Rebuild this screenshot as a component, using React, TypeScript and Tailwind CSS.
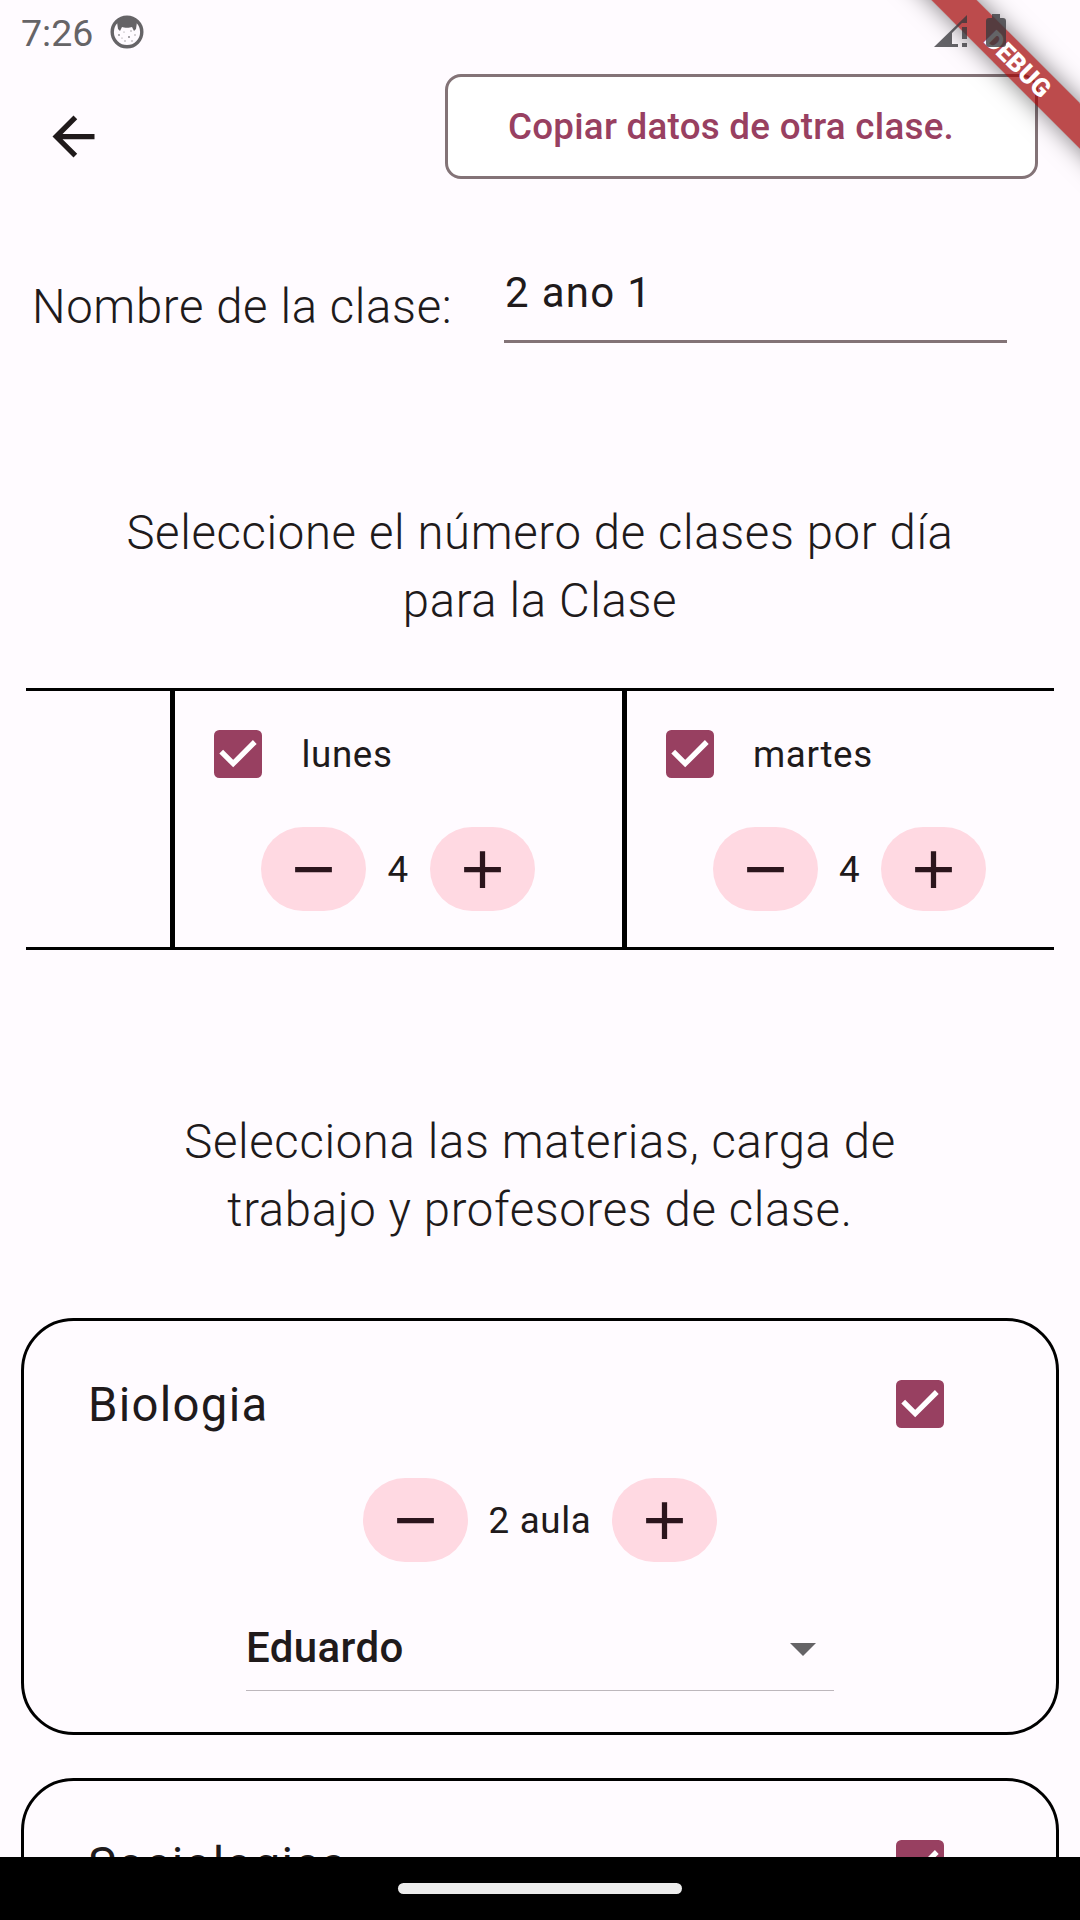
import React from "react";

function Check() {
  return (
    <svg className="h-[48px] w-[48px] shrink-0" viewBox="0 0 18 18">
      <rect width="18" height="18" rx="2" fill="#984061" />
      <path d="M2.7 8.1 7.2 12.6 15.3 4.5" fill="none" stroke="#fff" strokeWidth="2" />
    </svg>
  );
}

function RoundButton({ plus = false }: { plus?: boolean }) {
  return (
    <button className="flex h-[84px] w-[105px] shrink-0 items-center justify-center rounded-full bg-[#ffd9e2]">
      <svg className="h-[63px] w-[63px]" viewBox="0 0 24 24" fill="#2b151c">
        {plus ? <path d="M19 13h-6v6h-2v-6H5v-2h6V5h2v6h6v2z" /> : <path d="M19 13H5v-2h14v2z" />}
      </svg>
    </button>
  );
}

function Day({ name }: { name: string }) {
  return (
    <div className="flex w-[451.5px] shrink-0 flex-col border-l-[3px] border-r-[2px] border-black">
      <div className="mt-[39px] flex h-[48px] items-center pl-[39px]">
        <Check />
        <span className="pl-[39px] pt-[2px] text-[36.75px] leading-[48px] tracking-[0.66px]">{name}</span>
      </div>
      <div className="mt-[49px] flex items-center pl-[86px]">
        <RoundButton />
        <span className="w-[63.5px] pt-[2px] text-center text-[36.75px] tracking-[0.66px]">4</span>
        <RoundButton plus />
      </div>
    </div>
  );
}

type SubjectProps = { name: string; amount?: string; teacher?: string };

function Subject({ name, amount, teacher }: SubjectProps) {
  return (
    <section className="h-[417px] shrink-0 rounded-[52.5px] border-[3px] border-black">
      <div className="mt-[59px] flex h-[48px] items-center justify-between pl-[64px] pr-[112px]">
        <h3 className="pt-[2px] text-[47.25px] leading-[48px] tracking-[1.31px]">{name}</h3>
        <Check />
      </div>
      {amount && (
        <div className="mt-[50px] flex items-center justify-center">
          <RoundButton />
          <span className="w-[144px] pt-[2px] text-center text-[36.75px] tracking-[0.66px]">{amount}</span>
          <RoundButton plus />
        </div>
      )}
      {teacher && (
        <div className="mx-auto mt-[42px] flex h-[87px] w-[588px] items-center justify-between border-b border-[#bdb7bc] pr-[18px]">
          <span className="text-[42px] font-medium tracking-[0.39px]">{teacher}</span>
          <svg className="mt-[5px] h-[13px] w-[26px]" viewBox="0 0 26 13"><path d="M0 0h26L13 13z" fill="#656366" /></svg>
        </div>
      )}
    </section>
  );
}

function DebugBanner() {
  return (
    <div className="pointer-events-none absolute right-0 top-0 h-[220px] w-[220px] overflow-hidden">
      <div className="absolute left-[-2px] top-[48px] flex h-[32px] w-[320px] rotate-45 items-center justify-center bg-[#a00000]/70 text-[25.5px] font-black text-white shadow-[0_0_24px_rgba(0,0,0,0.5)]">
        <span>DEBUG</span>
      </div>
    </div>
  );
}

export default function App() {
  return (
    <div className="relative flex h-[1920px] w-[1080px] flex-col overflow-hidden bg-[#fffbff] font-['Roboto',sans-serif] text-[#201a1b]">
      <div className="flex h-[63px] shrink-0 items-center pl-[21px] text-[#666467]">
        <span className="pt-[3px] text-[37.5px] leading-[63px]">7:26</span>
        <svg className="ml-[17px] h-[34px] w-[34px]" viewBox="0 0 34 34">
          <circle cx="17" cy="17" r="14.8" fill="#fffbff" stroke="#666467" strokeWidth="3.4" />
          <path d="M7 7C12 1 22 1 27 7l-1 7-2 2-2-4C20 13 14 13 12 12l-2 4-2-2z" fill="#666467" />
          <g fill="#8b898c">
            <circle cx="9" cy="20" r=".9" /><circle cx="14" cy="17" r=".6" /><circle cx="19" cy="22" r="1" />
            <circle cx="25" cy="20" r=".7" /><circle cx="21" cy="16" r=".7" /><circle cx="15" cy="26" r=".7" />
            <circle cx="22" cy="26" r=".7" /><circle cx="12" cy="23" r=".6" />
          </g>
        </svg>
      </div>

      <header className="flex h-[116px] shrink-0 items-start justify-between px-[42px]">
        <svg className="mt-[42px] h-[63px] w-[63px]" viewBox="0 0 24 24" fill="#201a1b">
          <path d="M20 11H7.830l5.590-5.590L12 4l-8 8 8 8 1.410-1.410L7.830 13H20v-2z" />
        </svg>
        <button className="mt-[10.5px] h-[105px] w-[593px] rounded-[16px] border-[3px] border-[#837377] bg-white pr-[21px] pt-[1px] text-[36.75px] font-medium tracking-[0.26px] text-[#984061]">
          Copiar datos de otra clase.
        </button>
      </header>

      <div className="mt-[68px] flex h-[96px] shrink-0 pl-[32px]">
        <label className="w-[472px] pt-[32px] text-[47.25px] font-light leading-[56px] tracking-[0.66px]">Nombre de la clase:</label>
        <div className="h-[96px] w-[502.500px] border-b-[3px] border-[#837377] pl-px pt-[21px] text-[42px] leading-[49px] tracking-[1.31px]">2 ano 1</div>
      </div>

      <h2 className="mt-[156px] shrink-0 text-center text-[47.25px] font-light leading-[68px] tracking-[0.66px]">
        Seleccione el número de clases por día<br />para la Clase
      </h2>

      <div className="mx-[26px] mt-[53px] flex h-[262px] shrink-0 overflow-hidden border-y-[3px] border-black">
        <div className="w-[146.400px] shrink-0 border-r-[2px] border-black" />
        <Day name="lunes" />
        <Day name="martes" />
      </div>

      <h2 className="mt-[158px] shrink-0 text-center text-[47.25px] font-light leading-[68px] tracking-[0.66px]">
        Selecciona las materias, carga de<br />trabajo y profesores de clase.
      </h2>

      <main className="mt-[74px] flex h-[540px] shrink-0 flex-col gap-[43px] overflow-hidden px-[21px]">
        <Subject name="Biologia" amount="2 aula" teacher="Eduardo" />
        <Subject name="Sociologica" />
      </main>

      <footer className="absolute inset-x-0 bottom-0 flex h-[63px] justify-center bg-black pt-[26px]">
        <div className="h-[11px] w-[284px] rounded-full bg-[#ececec]" />
      </footer>

      <DebugBanner />
      <svg className="absolute left-[934px] top-[13px] h-[35px] w-[74px]" viewBox="0 0 74 35" fill="#39393c" fillOpacity=".78">
        <path d="M0 34 33 2v8H28L18 20v11h6v3zM28 14h5v12h-5zM28 30h5v4h-5z" />
        <path d="M58 1h8v4h3q3 0 3 3v23q0 3-3 3H55q-3 0-3-3V8q0-3 3-3h3z" />
      </svg>
    </div>
  );
}
